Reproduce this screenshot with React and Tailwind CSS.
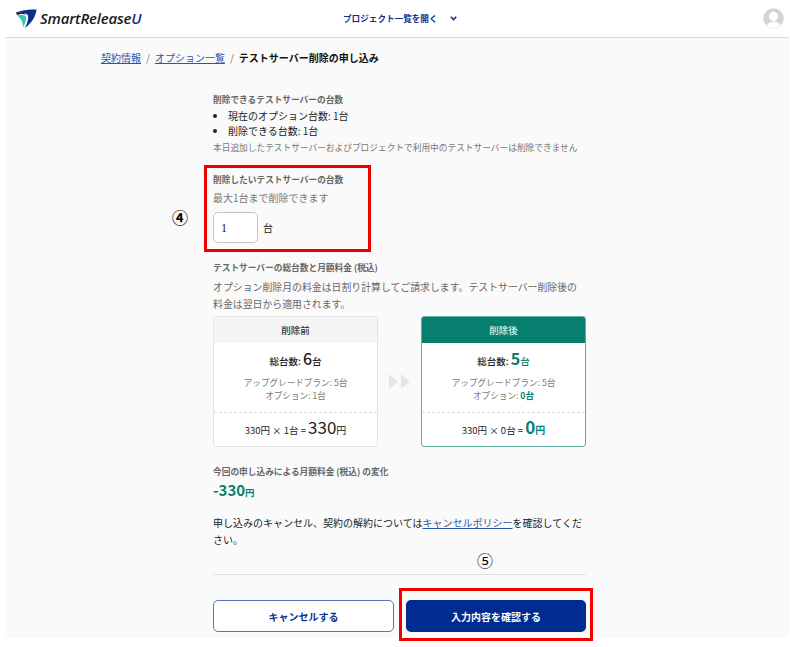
const jp = "font-['Noto_Sans_CJK_JP','Noto_Sans',sans-serif]";

function Logo() {
  return (
    <div className="flex items-center gap-[3px] shrink-0 w-[128px]">
      <svg width="22" height="20" viewBox="0 0 22 20" className="shrink-0">
        <path d="M1 3.5 C7 1 15 .5 21.5 .5 C21 6 18 13 10 19 C13 13 14 8 12.5 5.5 C10 3.5 5 3.5 1 3.5Z" fill="#0b2f8f" />
        <path d="M2 6.5 C6 5.5 10 6 11 8 C11.5 11 10 15 8 18.5 C8 14 7 10 2 6.5Z" fill="#3cc4b4" />
        <path d="M1 3.5 C5 3 9 3.5 12 5.5 C8 4.5 4 4.8 2 6Z" fill="#0a1a3c" />
      </svg>
      <span className="font-['Open_Sans',sans-serif] italic font-semibold text-[15px] leading-none tracking-[-0.2px] text-[#1a1a1a]">
        SmartRelease<span className="text-[#0b2f8f]">U</span>
      </span>
    </div>
  );
}

function Avatar() {
  return (
    <svg width="21" height="21" viewBox="0 0 21 21">
      <circle cx="10.5" cy="10.5" r="10.2" fill="#d4d4d4" />
      <circle cx="10.5" cy="8.4" r="4.6" fill="#fff" />
      <path d="M3.6 17.6 C5 14.6 8 13.6 10.5 13.6 C13 13.6 16 14.6 17.4 17.6 C15.6 19.6 13 20.4 10.5 20.4 C8 20.4 5.4 19.6 3.6 17.6Z" fill="#fff" />
    </svg>
  );
}

function Label({ children, className = "" }) {
  return <p className={`text-[8.7px] leading-[13px] font-bold text-[#666] ${className}`}>{children}</p>;
}

function PlanCard({ title, total, option, unitCount, price, after }) {
  const accent = after ? "text-[#077f6f]" : "text-[#222]";
  return (
    <div className={`w-[165px] h-[131px] rounded-[3px] border bg-white overflow-hidden ${after ? "border-[#5fae9f]" : "border-[#e4e4e4]"}`}>
      <div className={`h-[26px] flex items-center justify-center text-[9.5px] font-medium ${after ? "bg-[#077f6f] text-[#d8f0ec]" : "bg-[#f5f5f5] text-[#333]"}`}>
        {title}
      </div>
      <div className="h-[70px] border-b border-dashed border-[#dcdcdc] flex flex-col items-center">
        <p className="mt-[3px] h-[22px] flex items-baseline text-[9.5px] font-medium text-[#222]">
          総台数:&nbsp;
          <span className={`text-[16px] ${after ? "font-bold" : ""} ${accent}`}>{total}</span>
          <span className={`text-[9.5px] ${accent}`}>台</span>
        </p>
        <p className="mt-[8px] text-[8.6px] leading-[13px] text-[#777]">アップグレードプラン: 5台</p>
        <p className="text-[8.6px] leading-[13px] text-[#777]">
          オプション: <span className={after ? "font-bold text-[#077f6f]" : ""}>{option}台</span>
        </p>
      </div>
      <p className="h-[33px] flex items-baseline justify-center pt-[1px] text-[9.5px] text-[#222]">
        330円 × {unitCount}台 =&nbsp;
        <span className={`text-[17px] ${after ? "font-bold" : ""} ${accent}`}>{price}</span>
        <span className={`text-[10px] ${after ? "font-bold" : ""} ${accent}`}>円</span>
      </p>
    </div>
  );
}

export default function App() {
  return (
    <div className={`relative w-[790px] h-[647px] bg-white overflow-hidden ${jp}`}>
      <div className="ml-[5px] w-[784px] h-[638px] bg-[#fafafa]">
        <header className="h-[38px] bg-white border-b border-[#dcdcdc] flex items-center pl-[10px] pr-[5px]">
          <Logo />
          <nav className="ml-[200px] flex items-center gap-[12px] text-[#0b2f8f] text-[8.6px] font-bold">
            プロジェクト一覧を開く
            <svg width="7" height="5" viewBox="0 0 7 5" fill="none" stroke="#0b2f8f" strokeWidth="1.6">
              <path d="M.8 .8 3.5 3.6 6.2 .8" />
            </svg>
          </nav>
          <div className="ml-auto">
            <Avatar />
          </div>
        </header>

        <div className="pl-[96px] pt-[9px] flex items-center h-[21px] box-content text-[10px] text-[#777]">
          <a className="text-[#2b56b0] underline">契約情報</a>
          <span className="mx-[5px]">/</span>
          <a className="text-[#2b56b0] underline">オプション一覧</a>
          <span className="mx-[5px]">/</span>
          <span className="font-bold text-[#111]">テストサーバー削除の申し込み</span>
        </div>

        <main className="ml-[208px] w-[373px] pt-[25px] text-[10px] text-[#222]">
          <Label>削除できるテストサーバーの台数</Label>
          <ul className="mt-[2px] pl-[15px] list-disc leading-[15px] text-[10px]">
            <li>現在のオプション台数: 1台</li>
            <li>削除できる台数: 1台</li>
          </ul>
          <p className="mt-[3px] text-[8.7px] leading-[14px] text-[#777]">
            本日追加したテストサーバーおよびプロジェクトで利用中のテストサーバーは削除できません
          </p>

          <Label className="mt-[18px]">削除したいテストサーバーの台数</Label>
          <p className="mt-[4px] text-[#777] leading-[15px]">最大1台まで削除できます</p>
          <div className="mt-[7px] flex items-center gap-[5px]">
            <div className="w-[45px] h-[31px] rounded-[5px] border border-[#c4c4c4] bg-white flex items-center pl-[7px] text-[12px] font-['Liberation_Serif',serif] text-[#222]">
              1
            </div>
            <span className="text-[10px]">台</span>
          </div>

          <Label className="mt-[18px]">テストサーバーの総台数と月額料金 (税込)</Label>
          <p className="mt-[5px] leading-[16.5px] text-[#666] text-[9.9px]">
            オプション削除月の料金は日割り計算してご請求します。テストサーバー削除後の料金は翌日から適用されます。
          </p>

          <div className="mt-[4px] flex items-center justify-between">
            <PlanCard title="削除前" total="6" option="1" unitCount="1" price="330" />
            <svg width="22" height="15" viewBox="0 0 22 15" fill="#e6e6e6">
              <path d="M0 0 9 7.5 0 15Z" />
              <path d="M12 0 21 7.5 12 15Z" />
            </svg>
            <PlanCard title="削除後" total="5" option="0" unitCount="0" price="0" after />
          </div>

          <Label className="mt-[18px]">今回の申し込みによる月額料金 (税込) の変化</Label>
          <p className="mt-[1px] flex items-baseline font-bold text-[#077f6f] text-[15px] leading-[22px]">
            -330<span className="text-[9.5px]">円</span>
          </p>

          <p className="mt-[12px] leading-[16.5px] text-[#222]">
            申し込みのキャンセル、契約の解約については<a className="text-[#2b56b0] underline">キャンセルポリシー</a>を確認してください。
          </p>

          <div className="mt-[26px] border-t border-[#e2e2e2] pt-[25px] flex justify-between">
            <button className="w-[181px] h-[32px] rounded-[5px] border border-[#5a74b8] bg-white text-[#0b2f8f] text-[10px] font-bold">
              キャンセルする
            </button>
            <button className="w-[180px] h-[32px] rounded-[5px] bg-[#002b92] text-white text-[10px] font-bold">
              入力内容を確認する
            </button>
          </div>
        </main>
      </div>

      {/* annotations on top of the screenshot */}
      <div className="absolute left-[204px] top-[165px] w-[167px] h-[87px] border-[3px] border-[#f00000]" />
      <div className="absolute left-[399px] top-[588px] w-[194px] h-[53px] border-[3px] border-[#f00000]" />
      <span className="absolute left-[172px] top-[208px] text-[16px] leading-[18px] font-bold text-black">④</span>
      <span className="absolute left-[477px] top-[551px] text-[16px] leading-[18px] text-black">⑤</span>
    </div>
  );
}
